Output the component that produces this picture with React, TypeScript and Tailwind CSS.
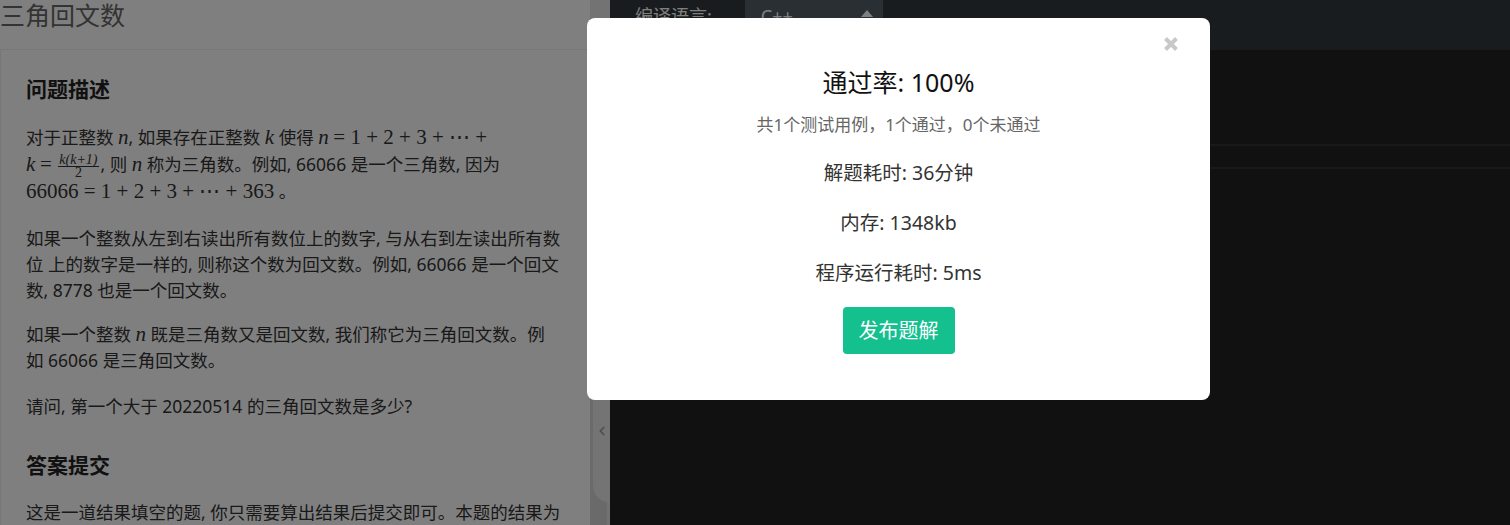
import { ChevronLeft } from 'lucide-react'

const sans = "font-['Noto_Sans','Noto_Sans_CJK_SC',sans-serif]"

function M({ children }: { children: React.ReactNode }) {
  return <span className="font-['Liberation_Serif',serif] text-[21px] italic leading-none">{children}</span>
}

function N({ children }: { children: React.ReactNode }) {
  return <span className="font-['Liberation_Serif',serif] text-[21px] leading-none">{children}</span>
}

function Frac() {
  return (
    <span className="mx-[2px] inline-flex flex-col items-center align-middle font-['Liberation_Serif',serif] leading-[12px]">
      <span className="border-b border-[#333] px-[1px] text-[14px] italic">k(k+1)</span>
      <span className="text-[14px]">2</span>
    </span>
  )
}

export default function App() {
  return (
    <div className={`relative h-[525px] w-[1510px] overflow-hidden bg-white ${sans}`}>
      <div className="flex h-full">
        {/* Problem panel */}
        <div className="flex w-[590px] flex-col">
          <h1 className="h-[49px] shrink-0 text-[25px] leading-[30px] text-[#666]">三角回文数</h1>
          <div className="flex-1 border-l border-t border-[#eee] pl-[25px] pr-[28px] pt-[24px] text-[17.5px] text-[#333]">
            <h2 className="mb-[20px] text-[21px] font-bold leading-[30px] text-[#222]">问题描述</h2>
            <div className="mb-[20px] leading-[27px]">
              <div className="h-[27px]">
                对于正整数 <M>n</M>, 如果存在正整数 <M>k</M> 使得 <M>n</M> <N>= 1 + 2 + 3 + ⋯ +</N>
              </div>
              <div className="h-[27px]">
                <M>k</M> <N>=</N> <Frac />, 则 <M>n</M> 称为三角数。例如, 66066 是一个三角数, 因为
              </div>
              <div className="h-[27px]">
                <N>66066 = 1 + 2 + 3 + ⋯ + 363</N> 。
              </div>
            </div>
            <p className="mb-[18px] leading-[26px]">
              如果一个整数从左到右读出所有数位上的数字, 与从右到左读出所有数位 上的数字是一样的, 则称这个数为回文数。例如, 66066 是一个回文数, 8778 也是一个回文数。
            </p>
            <p className="mb-[20px] leading-[26px]">
              如果一个整数 <M>n</M> 既是三角数又是回文数, 我们称它为三角回文数。例如 66066 是三角回文数。
            </p>
            <p className="leading-[26px]">请问, 第一个大于 20220514 的三角回文数是多少?</p>
            <h2 className="mb-[19px] mt-[31px] text-[21px] font-bold leading-[30px] text-[#222]">答案提交</h2>
            <p className="leading-[26px]">
              这是一道结果填空的题, 你只需要算出结果后提交即可。本题的结果为一个整数, 在提交答案时只填写这个整数, 填写多余的内容将无法得分。
            </p>
          </div>
        </div>

        {/* Divider */}
        <div className="flex w-[20px] flex-col bg-[#d4d4d4]">
          <div className="h-[360px] bg-[#e6e6e6]" />
          <div className="ml-[3px] flex h-[142px] items-center justify-center rounded-bl-[16px] bg-[#e8e8e8]">
            <ChevronLeft className="h-[14px] w-[14px] text-[#999]" strokeWidth={3} />
          </div>
          <div className="flex flex-1 justify-end">
            <div className="w-[3px] bg-[#e4e4e4]" />
          </div>
        </div>

        {/* Editor */}
        <div className="flex flex-1 flex-col bg-[#222]">
          <div className="flex h-[50px] shrink-0 bg-[#30383f]">
            <span className="pl-[25px] pt-[4px] text-[18px] leading-[24px] text-white">编译语言:</span>
            <div className="ml-[33px] flex w-[138px] bg-[#545e68] pl-[16px] pr-[10px] pt-[4px]">
              <span className="flex-1 text-[18px] leading-[24px] text-white">C++</span>
              <svg width="12" height="18" viewBox="0 0 12 18" className="mt-[6px]">
                <path d="M6 0 L12 7 H0 Z M6 18 L12 11 H0 Z" fill="#fff" />
              </svg>
            </div>
          </div>
          <div className="flex-1">
            <div className="mt-[94px] h-[2px] bg-[#333]" />
            <div className="mt-[21px] h-[2px] bg-[#333]" />
          </div>
        </div>
      </div>

      {/* Backdrop */}
      <div className="absolute inset-0 bg-black/50" />

      {/* Result dialog */}
      <div className="absolute left-[587px] top-[18px] flex h-[382px] w-[623px] flex-col items-center rounded-lg bg-white pt-[48px]">
        <button className="absolute right-[31px] top-[18px] p-0" aria-label="Close">
          <svg width="16" height="16" viewBox="0 0 16 16">
            <path d="M2.5 2.5 L13.5 13.5 M13.5 2.5 L2.5 13.5" stroke="#c8c8c8" strokeWidth="4" />
          </svg>
        </button>
        <h3 className="text-[25px] leading-[32px] text-[#111]">通过率: 100%</h3>
        <p className="mt-[15px] text-[17px] leading-[24px] text-[#666]">共1个测试用例，1个通过，0个未通过</p>
        <p className="mt-[22px] text-[19.5px] leading-[28px] text-[#333]">解题耗时: 36分钟</p>
        <p className="mt-[22px] text-[19.5px] leading-[28px] text-[#333]">内存: 1348kb</p>
        <p className="mt-[22px] text-[19.5px] leading-[28px] text-[#333]">程序运行耗时: 5ms</p>
        <button className="mt-[20px] h-[47px] w-[112px] rounded bg-[#13c08e] text-[20px] text-white">发布题解</button>
      </div>
    </div>
  )
}
